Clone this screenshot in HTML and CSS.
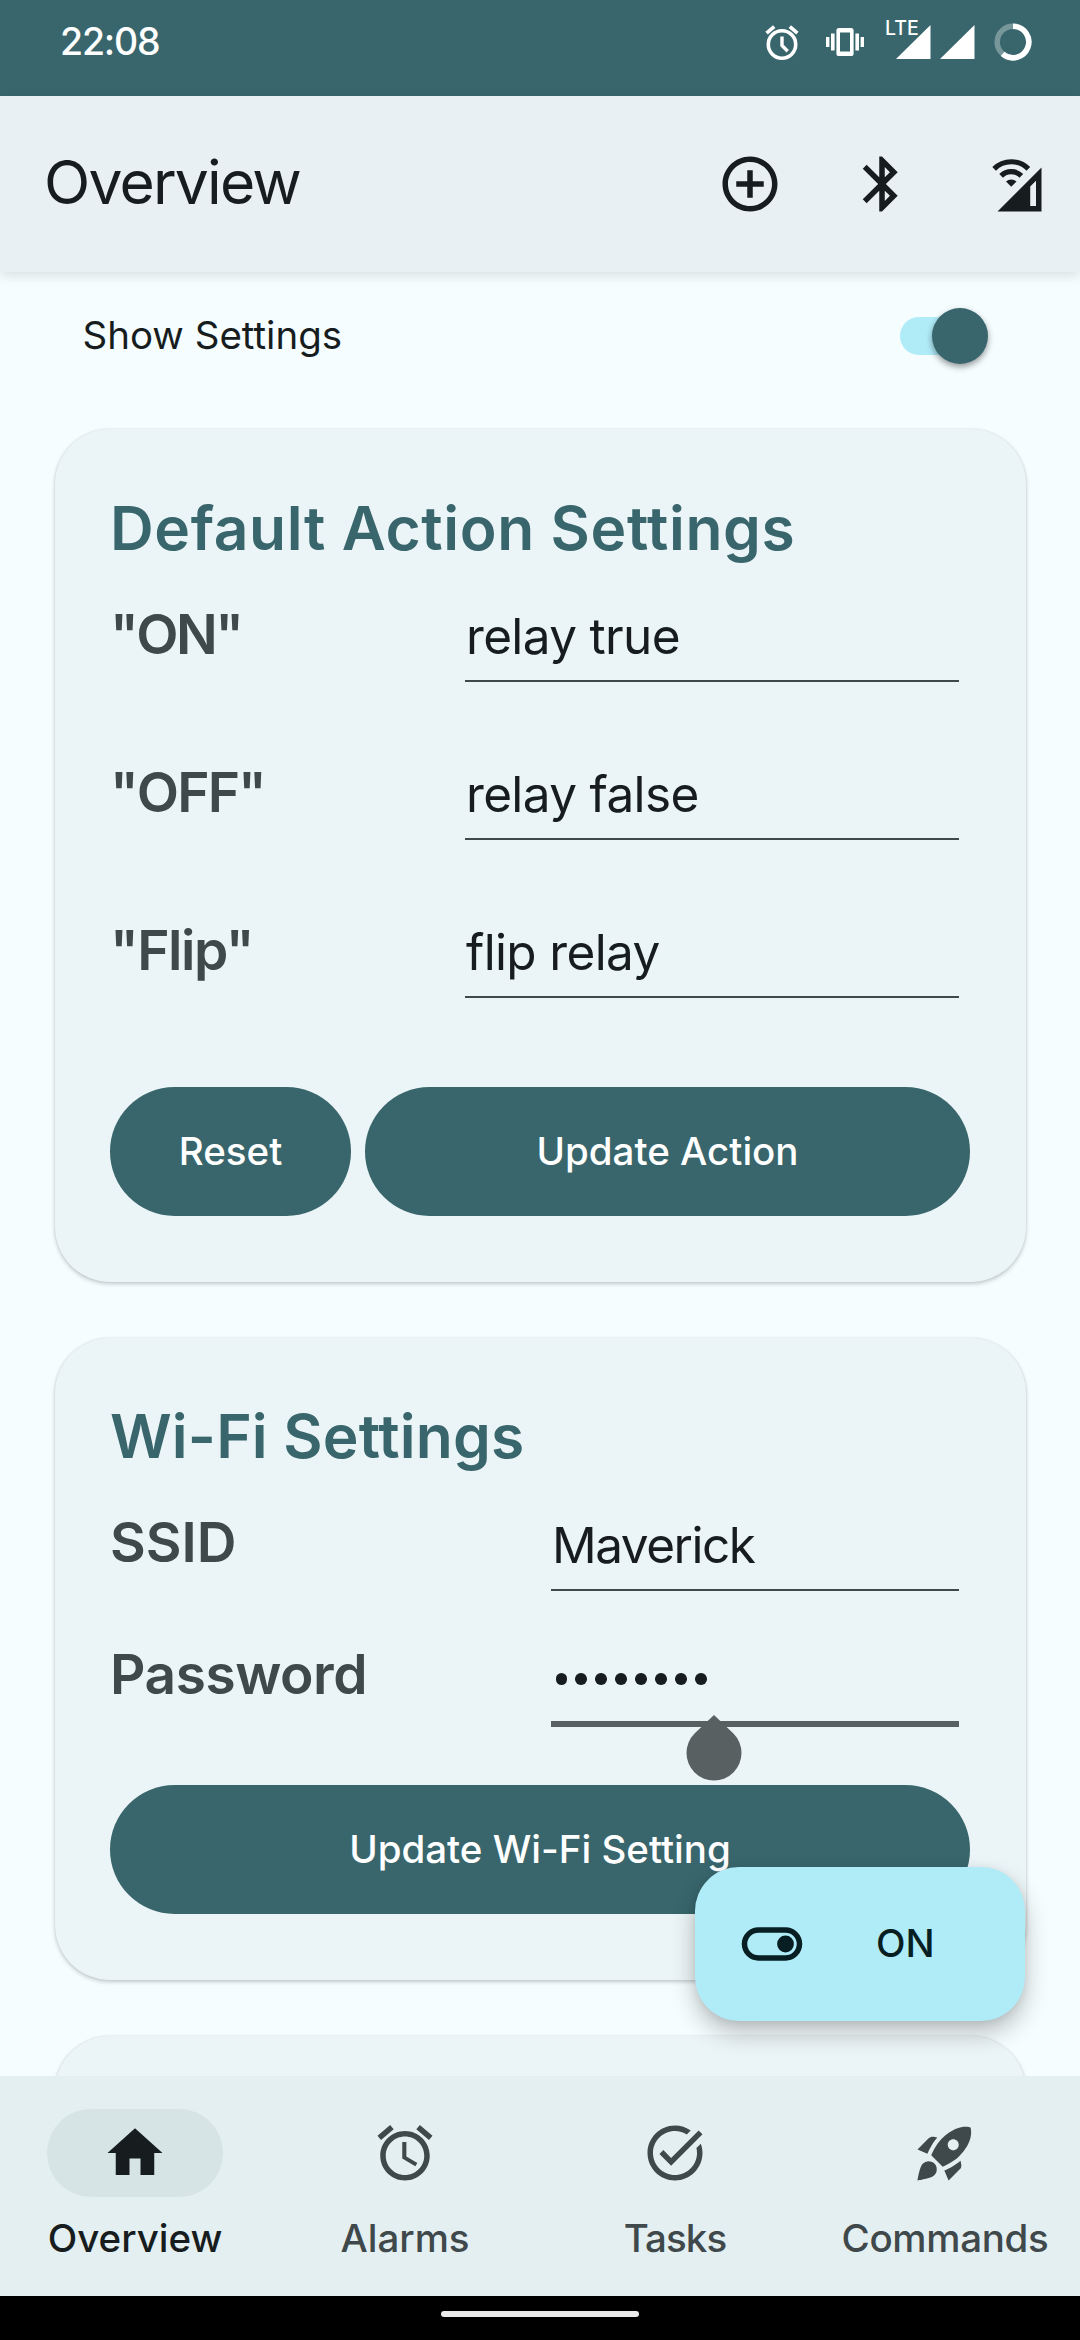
FILE: index.html
```html
<!DOCTYPE html>
<html lang="en">
<head>
<meta charset="utf-8">
<title>Overview</title>
<link rel="stylesheet" href="styles.css">
</head>
<body>
<header class="status-bar">
  <span class="clock">22:08</span>
  <div class="status-icons">
    <svg class="status-alarm" width="36" height="36" viewBox="0 0 36 36" fill="none" stroke="#fff">
      <circle cx="18" cy="20.5" r="13.7" stroke-width="3.6"/>
      <path d="M18 12.5v9l5.7 5.7" stroke-width="3.4"/>
      <path d="M2.6 9.2l7.6-6.6M33.4 9.2l-7.6-6.6" stroke-width="3.6"/>
    </svg>
    <svg class="status-vibrate" width="38" height="30" viewBox="0 0 38 30" fill="#fff">
      <path fill-rule="evenodd" d="M13 1h12a2.6 2.6 0 0 1 2.6 2.6v22.8A2.6 2.6 0 0 1 25 29H13a2.6 2.6 0 0 1-2.600-2.600V3.600A2.600 2.600 0 0 1 13 1zM14 5.500v19h10v-19z"/>
      <path d="M5 6.500h3.600v17H5zM29.400 6.500H33v17h-3.600zM0 10h3.400v10H0zM34.600 10H38v10h-3.400z"/>
    </svg>
    <div class="lte">
      <span class="lte-label">LTE</span>
      <svg width="35" height="34" viewBox="0 0 35 34" fill="#fff"><path d="M34.500 0v34H0z"/></svg>
    </div>
    <svg class="status-signal" width="35" height="34" viewBox="0 0 35 34" fill="#fff"><path d="M34.500 0v34H0z"/></svg>
    <svg class="status-battery" width="38" height="38" viewBox="0 0 38 38" fill="none" stroke="#fff" stroke-width="5.500">
      <circle cx="19" cy="19" r="15.800" stroke-opacity=".32"/>
      <path d="M19 3.200A15.800 15.800 0 1 1 8.600 30.900"/>
    </svg>
  </div>
</header>

<div class="toolbar">
  <h1 class="toolbar-title">Overview</h1>
  <div class="toolbar-actions">
    <svg class="icon" viewBox="0 0 24 24"><path d="M13 7h-2v4H7v2h4v4h2v-4h4v-2h-4V7zm-1-5C6.480 2 2 6.480 2 12s4.480 10 10 10 10-4.480 10-10S17.520 2 12 2zm0 18c-4.410 0-8-3.590-8-8s3.590-8 8-8 8 3.590 8 8-3.590 8-8 8z"/></svg>
    <svg class="icon" viewBox="0 0 24 24"><path d="M17.710 7.710L12 2h-1v7.590L6.410 5 5 6.410 10.590 12 5 17.590 6.410 19 11 14.410V22h1l5.710-5.710-4.300-4.290 4.300-4.290zM13 5.830l1.880 1.880L13 9.590V5.830zm1.880 10.460L13 18.170v-3.760l1.880 1.880z"/></svg>
    <svg class="icon" viewBox="0 0 24 24">
      <path fill="none" stroke="currentColor" stroke-width="1.900" d="M4.780 6.480a8.800 8.800 0 0 1 12.440 0M7.320 9.020a5.200 5.200 0 0 1 7.360 0"/>
      <path d="M11 13l-1.900-1.900a2.700 2.700 0 0 1 3.800 0z"/>
      <path fill-rule="evenodd" d="M22 6v16H6zM20 10.800l-2.100 2.100V20H20z"/>
    </svg>
  </div>
</div>

<main class="content">
  <div class="switch-row">
    <span class="switch-label">Show Settings</span>
    <span class="switch"><span class="switch-thumb"></span></span>
  </div>

  <section class="card card-actions">
    <h2 class="card-title">Default Action Settings</h2>
    <div class="fields">
      <span class="label label-on">"ON"</span><span class="input">relay true</span>
      <span class="label label-off">"OFF"</span><span class="input">relay false</span>
      <span class="label label-flip">"Flip"</span><span class="input">flip relay</span>
    </div>
    <div class="buttons">
      <button class="button button-reset">Reset</button>
      <button class="button button-wide">Update Action</button>
    </div>
  </section>

  <section class="card card-wifi">
    <h2 class="card-title">Wi-Fi Settings</h2>
    <div class="fields">
      <span class="label">SSID</span><span class="input input-ssid">Maverick</span>
      <span class="label label-password">Password</span>
      <span class="input input-focused">
        <span class="dots"><i></i><i></i><i></i><i></i><i></i><i></i><i></i><i></i></span>
        <svg class="handle" width="56" height="66" viewBox="0 0 56 66"><path d="M28 0l19.450 18.550a27.500 27.500 0 1 1-38.900 0z"/></svg>
      </span>
    </div>
    <div class="buttons">
      <button class="button button-wide">Update Wi-Fi Setting</button>
    </div>
  </section>

  <section class="card card-next"></section>

  <div class="fab">
    <svg width="62" height="36" viewBox="0 0 62 36"><rect x="3.500" y="4" width="55" height="28" rx="14" fill="none" stroke="currentColor" stroke-width="5.500"/><circle cx="44.500" cy="18" r="8.400" fill="currentColor"/></svg>
    <span class="fab-label">ON</span>
  </div>
</main>

<nav class="bottom-nav">
  <a class="nav-item nav-active">
    <span class="nav-pill"><svg class="icon" viewBox="0 0 24 24"><path d="M10 20v-6h4v6h5v-8h3L12 3 2 12h3v8z"/></svg></span>
    <span class="nav-label">Overview</span>
  </a>
  <a class="nav-item">
    <span class="nav-pill"><svg class="icon" viewBox="0 0 24 24"><path d="M22 5.720l-4.600-3.860-1.290 1.530 4.600 3.860L22 5.720zM7.880 3.390L6.600 1.860 2 5.710l1.290 1.530 4.590-3.850zM12.500 8H11v6l4.750 2.850.75-1.230-4-2.370V8zM12 4c-4.970 0-9 4.030-9 9s4.020 9 9 9c4.970 0 9-4.030 9-9s-4.030-9-9-9zm0 16c-3.870 0-7-3.130-7-7s3.130-7 7-7 7 3.130 7 7-3.130 7-7 7z"/></svg></span>
    <span class="nav-label">Alarms</span>
  </a>
  <a class="nav-item">
    <span class="nav-pill"><svg class="icon" viewBox="0 0 24 24"><path d="M22 5.180L10.590 16.600l-4.240-4.240 1.410-1.410 2.830 2.830 10-10L22 5.180zM19.790 10.220c.13.570.21 1.170.21 1.780 0 4.420-3.580 8-8 8s-8-3.580-8-8 3.580-8 8-8c1.580 0 3.040.46 4.280 1.250l1.440-1.440C16.100 2.670 14.130 2 12 2 6.480 2 2 6.480 2 12s4.480 10 10 10 10-4.480 10-10c0-1.190-.22-2.330-.6-3.390l-1.610 1.610z"/></svg></span>
    <span class="nav-label nav-tasks">Tasks</span>
  </a>
  <a class="nav-item">
    <span class="nav-pill"><svg class="icon" viewBox="0 0 24 24"><path fill-rule="evenodd" d="M9.190 6.350c-2.040 2.290-3.440 5.580-3.570 5.890L2 10.690l4.050-4.050c.47-.47 1.150-.68 1.810-.55l1.330.26zM11.170 17s3.740-1.550 5.890-3.700c5.400-5.400 4.500-9.620 4.210-10.570-.95-.3-5.170-1.190-10.570 4.210C8.550 9.090 7 12.830 7 12.830L11.170 17zM17.650 14.810c-2.290 2.040-5.580 3.440-5.890 3.570L13.310 22l4.050-4.050c.47-.47.68-1.150.55-1.810l-.26-1.330zM9 18c0 .83-.34 1.580-.88 2.120C6.940 21.300 2 22 2 22s.7-4.940 1.880-6.120A2.996 2.996 0 0 1 9 18zM13 9c0-1.100.9-2 2-2s2 .9 2 2-.9 2-2 2-2-.9-2-2z"/></svg></span>
    <span class="nav-label nav-commands">Commands</span>
  </a>
</nav>

<footer class="gesture-bar"><span class="gesture-handle"></span></footer>
</body>
</html>
```

FILE: styles.css
```css
* { box-sizing: border-box; }

body {
  margin: 0;
  width: 1080px;
  height: 2340px;
  display: flex;
  flex-direction: column;
  overflow: hidden;
  background: #f5fdff;
  color: #171d1e;
  font-family: Inter, Roboto, sans-serif;
  font-size: 38.5px;
  white-space: nowrap;
}

svg { display: block; flex: none; }
h1, h2 { margin: 0; }
.icon { width: 66px; height: 66px; fill: currentColor; }

/* Status bar */
.status-bar {
  flex: none;
  height: 96px;
  padding: 0 48px 13px 60px;
  display: flex;
  justify-content: space-between;
  align-items: center;
  background: #38666c;
  color: #fff;
}
.clock { font-size: 37.5px; font-weight: 500; letter-spacing: -1.2px; }
.status-icons { display: flex; align-items: center; }
.status-vibrate { margin-left: 26px; }
.lte { position: relative; margin-left: 32px; }
.lte-label {
  position: absolute;
  left: -11px;
  top: -7px;
  font-size: 19.5px;
  line-height: 20px;
  font-weight: 500;
}
.status-signal { margin-left: 9px; }
.status-battery { margin-left: 19px; }

/* Toolbar */
.toolbar {
  flex: none;
  position: relative;
  z-index: 1;
  height: 176px;
  padding: 0 33px 0 44px;
  display: flex;
  justify-content: space-between;
  align-items: center;
  background: #e8f0f3;
  box-shadow: 0 3px 12px rgba(0, 0, 0, .13);
}
.toolbar-title {
  margin-top: -4px;
  font-size: 60.5px;
  font-weight: 400;
  line-height: 76px;
  letter-spacing: -1.8px;
}
.toolbar-actions { display: flex; gap: 66px; }

/* Scrolling content */
.content {
  flex: 1;
  min-height: 0;
  position: relative;
  overflow: hidden;
  padding: 0 54.5px;
}
.switch-row {
  height: 128px;
  margin-bottom: 29px;
  padding: 0 37.5px 0 28px;
  display: flex;
  justify-content: space-between;
  align-items: center;
}
.switch-label { padding-bottom: 3px; }
.switch {
  width: 88px;
  height: 38px;
  padding-left: 32px;
  border-radius: 19px;
  background: linear-gradient(90deg, #b0ecf8 66px, transparent 66px);
  display: flex;
  align-items: center;
}
.switch-thumb {
  width: 56px;
  height: 56px;
  flex: none;
  border-radius: 50%;
  background: #38666c;
  box-shadow: 0 3px 6px rgba(0, 0, 0, .4);
}

.card {
  margin-bottom: 56px;
  padding: 63px 55.5px 0;
  border-radius: 55px;
  background: #ebf4f6;
  box-shadow: 0 2px 4px rgba(0, 0, 0, .2), 0 0 2px rgba(0, 0, 0, .1);
}
.card-actions { height: 853px; }
.card-wifi { height: 642px; padding-top: 62px; }
.card-next { height: 300px; }
.card-title {
  margin-bottom: 20px;
  color: #38666c;
  font-size: 60.5px;
  font-weight: 600;
  line-height: 72px;
  letter-spacing: .15px;
}
.card-actions .card-title { letter-spacing: .6px; }
.fields { display: grid; }
.card-actions .fields { grid-template-columns: 355px 494px; row-gap: 60px; }
.card-wifi .fields { grid-template-columns: 441px 408px; row-gap: 33px; }
.label {
  height: 98px;
  font-size: 55px;
  font-weight: 600;
  line-height: 101px;
  color: #3f484a;
}
.label-on { letter-spacing: -2.5px; }
.label-off { letter-spacing: -1.9px; }
.label-flip { letter-spacing: -1.5px; }
.label-password { letter-spacing: -.45px; }
.input {
  height: 98px;
  padding: 6px 0 0 1px;
  border-bottom: 2px solid #3f484a;
  font-size: 49.5px;
  line-height: 92px;
  letter-spacing: -.65px;
}
.input-ssid { height: 99px; padding-top: 7px; letter-spacing: -1.5px; }
.input-focused {
  position: relative;
  height: 103px;
  padding-top: 49px;
  border-bottom: 6px solid #596061;
}
.dots { display: flex; gap: 8.4px; padding-left: 3.5px; }
.dots i { width: 11.6px; height: 11.6px; border-radius: 50%; background: #171d1e; }
.handle { position: absolute; left: 134.5px; top: 91px; fill: #596061; z-index: 1; }

.buttons { display: flex; gap: 14px; margin-top: 89px; }
.card-wifi .buttons { margin-top: 58px; }
.button {
  height: 128.5px;
  padding: 0;
  border: 0;
  border-radius: 65px;
  background: #38666c;
  color: #fff;
  font: 500 38.5px Inter, Roboto, sans-serif;
}
.button-reset { width: 241px; }
.button-wide { flex: 1; }

.fab {
  position: absolute;
  left: 695px;
  top: 1595px;
  width: 330px;
  height: 154px;
  padding-left: 46px;
  display: flex;
  align-items: center;
  gap: 73px;
  border-radius: 44px;
  background: #b0ecf8;
  color: #071f22;
  font-weight: 500;
  box-shadow: 0 12px 24px rgba(0, 0, 0, .24), 0 2px 8px rgba(0, 0, 0, .08);
}
.fab-label { padding-bottom: 2px; }

/* Bottom navigation */
.bottom-nav {
  flex: none;
  height: 220px;
  padding-top: 33px;
  display: grid;
  grid-template-columns: repeat(4, 270px);
  background: #e4eff1;
  color: #3f484a;
}
.nav-item { display: flex; flex-direction: column; align-items: center; gap: 17px; }
.nav-active { color: #171d1e; }
.nav-pill {
  width: 176px;
  height: 88px;
  border-radius: 44px;
  display: flex;
  align-items: center;
  justify-content: center;
}
.nav-active .nav-pill { background: #d6e4e5; }
.nav-label { font-weight: 500; line-height: 48px; }
.nav-tasks { letter-spacing: -.9px; }
.nav-commands { letter-spacing: -.3px; }

.gesture-bar {
  flex: none;
  height: 44px;
  padding-top: 15px;
  display: flex;
  justify-content: center;
  align-items: flex-start;
  background: #000;
}
.gesture-handle { width: 198px; height: 6px; border-radius: 3px; background: #ebebeb; }
```
